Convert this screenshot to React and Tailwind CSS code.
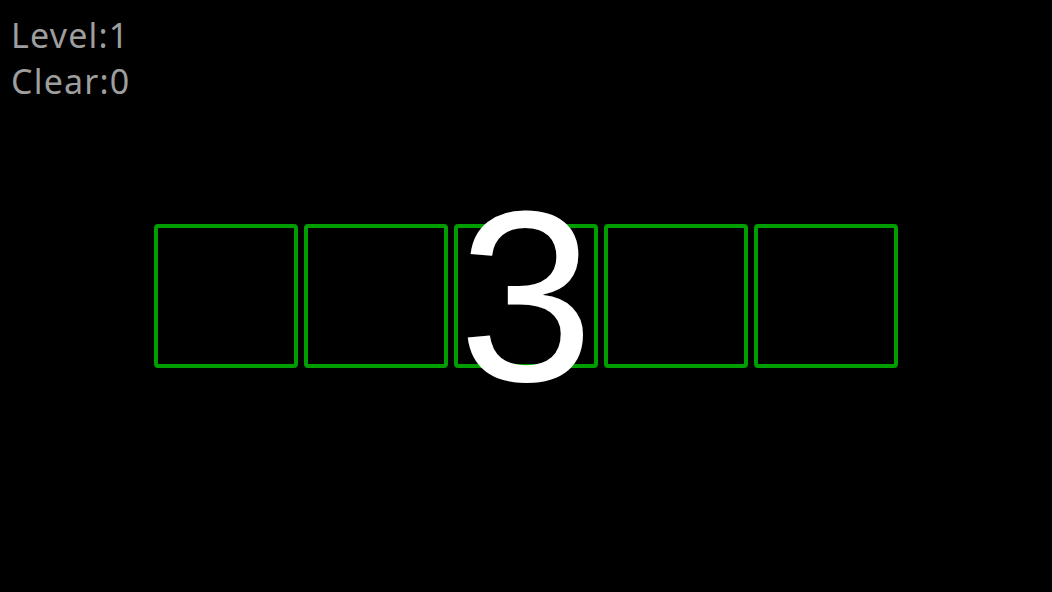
export default function App() {
  const boxes = [0, 1, 2, 3, 4];

  return (
    <div className="relative w-[1052px] h-[592px] bg-black overflow-hidden">
      <div className="absolute left-[11px] top-[12px] text-[34px] leading-[46px] tracking-[1.2px] text-[#9e9e9e]" style={{ fontFamily: '"Noto Sans", sans-serif' }}>
        <p>Level:1</p>
        <p>Clear:0</p>
      </div>

      <div className="h-full flex items-center justify-center gap-[6px]">
        {boxes.map((i) => (
          <div key={i} className="w-[144px] h-[144px] border-[4px] border-[#009d00] rounded-[4px]" />
        ))}
      </div>

      <div className="absolute inset-0 flex items-center justify-center">
        <span className="text-white text-[243px] leading-none" style={{ fontFamily: '"Liberation Sans", Arial, sans-serif' }}>
          3
        </span>
      </div>
    </div>
  );
}
